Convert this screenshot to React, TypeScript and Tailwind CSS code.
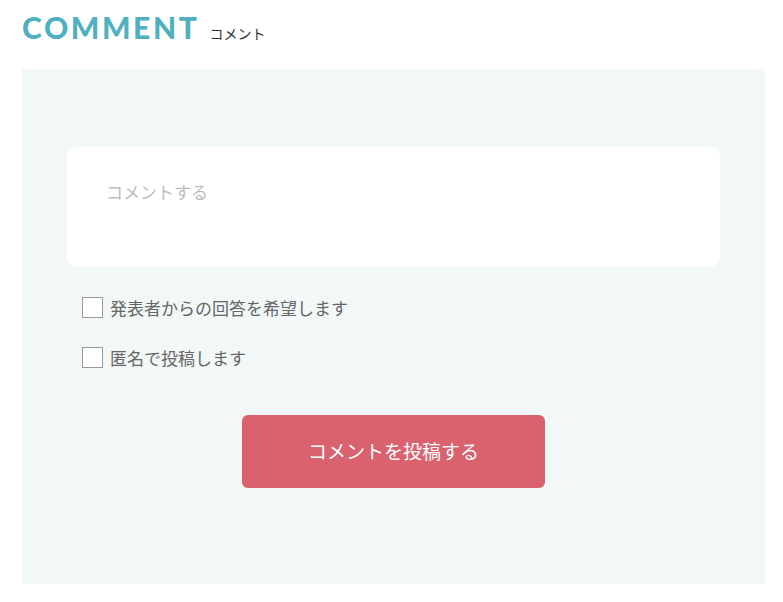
export default function App() {
  return (
    <div className="min-h-screen bg-white" style={{ fontFamily: "'Noto Sans', 'Noto Sans CJK JP', sans-serif" }}>
      <div className="px-[22px] pt-[10px] pr-[18px]">
        <div className="flex items-end gap-[10px] h-[32px]">
          <h2 className="text-[30px] leading-none font-black tracking-[2.6px] text-[#4fb1bf]" style={{ fontFamily: "Lato, sans-serif" }}>COMMENT</h2>
          <span className="text-[14px] leading-none text-[#333] mb-[2px]" style={{ fontFamily: "'Noto Sans CJK JP', sans-serif" }}>コメント</span>
        </div>

        <div className="mt-[27px] bg-[#f2f7f7] px-[45px] pt-[78px] pb-[96px]">
          <div className="h-[120px] rounded-[10px] bg-white px-[39px] pt-[33px]">
            <p className="text-[17px] leading-[24px] text-[#bcbcbc]" style={{ fontFamily: "'Noto Sans CJK JP', sans-serif" }}>コメントする</p>
          </div>

          <div className="mt-[30px] flex flex-col gap-[29px] pl-[15px]">
            <label className="flex items-center gap-[7px] h-[21px]">
              <span className="w-[21px] h-[21px] border border-[#999] bg-white" />
              <span className="text-[17px] leading-[21px] text-[#666]" style={{ fontFamily: "'Noto Sans CJK JP', sans-serif" }}>発表者からの回答を希望します</span>
            </label>
            <label className="flex items-center gap-[7px] h-[21px]">
              <span className="w-[21px] h-[21px] border border-[#999] bg-white" />
              <span className="text-[17px] leading-[21px] text-[#666]" style={{ fontFamily: "'Noto Sans CJK JP', sans-serif" }}>匿名で投稿します</span>
            </label>
          </div>

          <div className="mt-[47px] flex justify-center">
            <button className="w-[303px] h-[73px] rounded-[6px] bg-[#da626f] text-white text-[19px]" style={{ fontFamily: "'Noto Sans CJK JP', sans-serif" }}>
              コメントを投稿する
            </button>
          </div>
        </div>
      </div>
    </div>
  )
}
